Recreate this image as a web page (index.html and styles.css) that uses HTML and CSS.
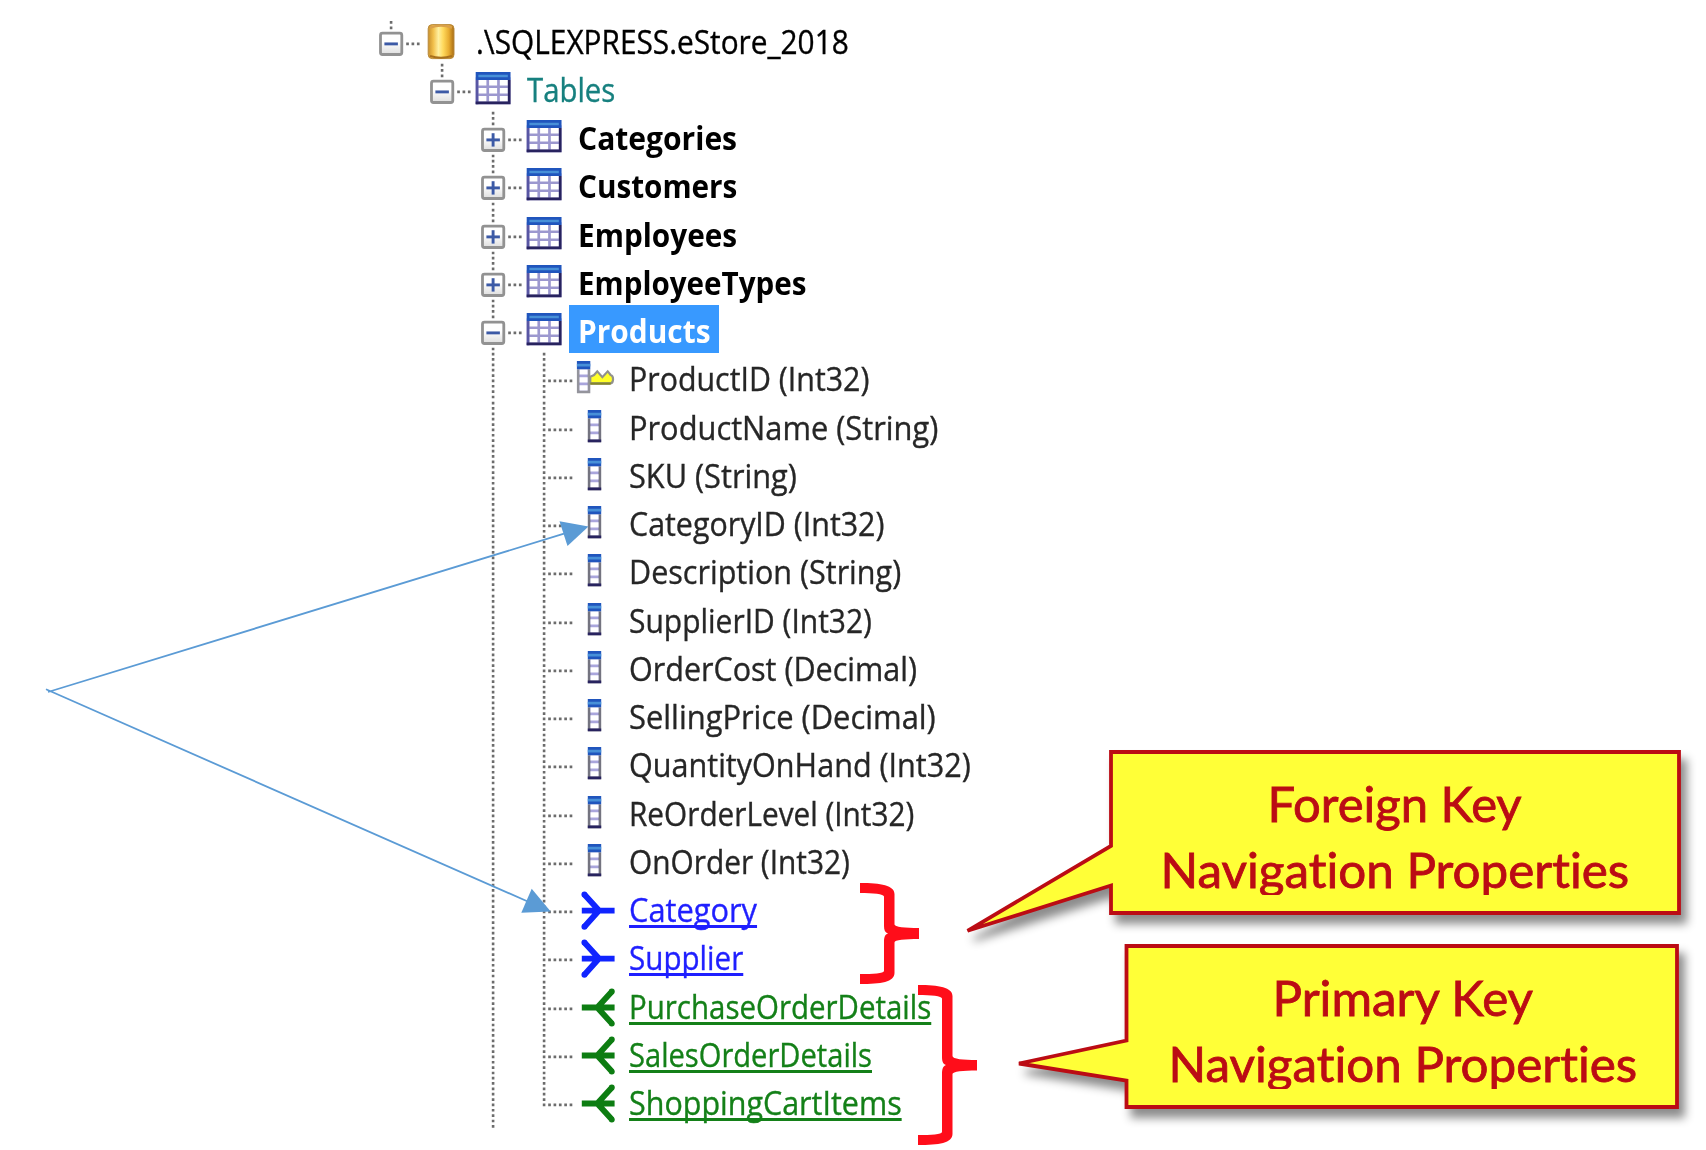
FILE: index.html
```html
<!DOCTYPE html>
<html lang="en">
<head>
<meta charset="utf-8">
<title>eStore_2018 tables</title>
<link rel="stylesheet" href="styles.css">
</head>
<body>
<svg class="defs" aria-hidden="true">
  <defs>
    <linearGradient id="gold" x1="0" x2="1" y1="0" y2="0">
      <stop offset="0" stop-color="#c8902c"/><stop offset=".2" stop-color="#f2c04c"/><stop offset=".4" stop-color="#fff0a0"/><stop offset=".58" stop-color="#ffd95c"/><stop offset=".8" stop-color="#e8ac30"/><stop offset="1" stop-color="#a86c14"/>
    </linearGradient>
    <linearGradient id="btn" x1="0" x2="0" y1="0" y2="1">
      <stop offset=".4" stop-color="#fff"/><stop offset="1" stop-color="#dedede"/>
    </linearGradient>
    <symbol id="rail" viewBox="0 0 50.9 48.25" overflow="visible">
      <path class="dots" d="M25.1 -.24V48.1"/>
    </symbol>
    <symbol id="rail-last" viewBox="0 0 50.9 48.25" overflow="visible">
      <path class="dots" d="M25.1 -.24V51"/>
    </symbol>
    <symbol id="tee" viewBox="0 0 50.9 48.25" overflow="visible">
      <path class="dots" d="M25.1 -.24V48.1"/><path class="dots" d="M29.2 27.9H54"/>
    </symbol>
    <symbol id="end" viewBox="0 0 50.9 48.25" overflow="visible">
      <path class="dots" d="M25.1 -.24V29.5"/><path class="dots" d="M29.2 27.9H54"/>
    </symbol>
    <symbol id="box" viewBox="0 0 50.9 48.25" overflow="visible">
      <path class="dots" d="M40.2 27.9H54"/>
      <rect x="14.5" y="17.2" width="21.3" height="21.3" rx="2" fill="url(#btn)" stroke="#929292" stroke-width="2.8"/>
      <path d="M18.4 27.9H31.9" stroke="#3c5aa6" stroke-width="2.9"/>
    </symbol>
    <symbol id="minus-root" viewBox="0 0 50.9 48.25" overflow="visible">
      <path class="dots" d="M25.1 5.1V14"/><use href="#box" width="50.9" height="48.25"/>
    </symbol>
    <symbol id="minus-last" viewBox="0 0 50.9 48.25" overflow="visible">
      <path class="dots" d="M25.1 -.24V14"/><use href="#box" width="50.9" height="48.25"/>
    </symbol>
    <symbol id="minus" viewBox="0 0 50.9 48.25" overflow="visible">
      <path class="dots" d="M25.1 -.24V14M25.1 42.64V48.1"/><use href="#box" width="50.9" height="48.25"/>
    </symbol>
    <symbol id="plus" viewBox="0 0 50.9 48.25" overflow="visible">
      <use href="#minus" width="50.9" height="48.25"/><path d="M25.1 21.2V34.6" stroke="#3c5aa6" stroke-width="2.9"/>
    </symbol>
    <symbol id="db" viewBox="0 0 50.9 48.25">
      <rect x="11.2" y="8.6" width="25.8" height="34" rx="4" fill="url(#gold)" stroke="#b98a3c" stroke-width="1"/>
      <path d="M13 11.5Q24 7.8 35 11.5" fill="none" stroke="#d9a04a" stroke-width="2.4"/>
      <path d="M13 40Q24 43.5 35 40" fill="none" stroke="#a8701c" stroke-width="2.2"/>
    </symbol>
    <symbol id="table" viewBox="0 0 50.9 48.25">
      <g transform="translate(7.7 8) scale(2.68)">
        <path fill="#9c98cf" d="M0 2h13v10H0z"/><path fill="#2055bd" d="M0 0h13v3H0z"/><path fill="#4790d8" d="M1 1h11v1H1z"/>
        <path fill="#fff" d="M1 3h3v2H1zM5 3h3v2H5zM9 3h3v2H9zM1 6h3v2H1zM5 6h3v2H5zM9 6h3v2H9zM1 9h3v2H1zM5 9h3v2H5zM9 9h3v2H9z"/>
        <path fill="#5856a4" d="M0 3h1v9H0z"/><path fill="#28235f" d="M12 3h1v9H0v-1h12z"/>
      </g>
    </symbol>
    <symbol id="column" viewBox="0 0 50.9 48.25">
      <g transform="translate(18.8 8.1) scale(2.68)">
        <path fill="#747480" d="M0 3h5v9H0z"/><path fill="#a9a5dc" d="M1 3h3v8H1z"/><path fill="#fff" d="M1 3h3v2H1zM1 6h3v2H1zM1 9h3v2H1z"/>
        <path fill="#2055bd" d="M0 0h5v3H0z"/><path fill="#4790d8" d="M0 1h5v1H0z"/><path fill="#28235f" d="M0 11h5v1H0z"/>
      </g>
    </symbol>
    <symbol id="key" viewBox="0 0 50.9 48.25">
      <g transform="translate(7.9 8.1) scale(2.68)">
        <path fill="#94949c" d="M0 3h5v9H0z"/><path fill="#a9a5dc" d="M1 3h3v8H1z"/><path fill="#fff" d="M1 3h3v2H1zM1 6h3v2H1zM1 9h3v2H1z"/>
        <path fill="#2055bd" d="M0 0h5v3H0z"/><path fill="#4790d8" d="M0 1h5v1H0z"/>
        <path d="M5 5.8L6.4 5.2L7.6 3.8L9.5 6L11.5 3.8L12.6 5.2Q13.5 5.5 13.5 6.8Q13.5 8.2 12.6 8.3H5z" fill="#ffff28" stroke="#92928c" stroke-width=".8"/>
        <path d="M5 8.4H12.6" stroke="#85852a" stroke-width=".9"/>
      </g>
    </symbol>
    <symbol id="to-one" viewBox="0 0 50.9 48.25">
      <path d="M12.8 26.6H45.6M15.4 10.6L30 26.6L15.4 42.8" fill="none" stroke="#1024ff" stroke-width="5.9"/>
      <circle cx="15.4" cy="10.5" r="2.95" fill="#1024ff"/><circle cx="15.4" cy="42.8" r="2.95" fill="#1024ff"/>
    </symbol>
    <symbol id="to-many" viewBox="0 0 50.9 48.25">
      <path d="M12.8 26.5H45.6M42.9 10.6L28.3 26.5L42.9 42.6" fill="none" stroke="#0d7d12" stroke-width="5.9"/>
      <circle cx="42.8" cy="10.5" r="2.95" fill="#0d7d12"/><circle cx="42.8" cy="42.6" r="2.95" fill="#0d7d12"/>
    </symbol>
  </defs>
</svg>

<main class="tree">
  <div class="row l0"><svg><use href="#minus-root"/></svg><svg><use href="#db"/></svg><span class="label root" data-width="372.5">.\SQLEXPRESS.eStore_2018</span></div>
  <div class="row l1"><svg><use href="#minus-last"/></svg><svg><use href="#table"/></svg><span class="label folder" data-width="88">Tables</span></div>
  <div class="row l2"><svg><use href="#plus"/></svg><svg><use href="#table"/></svg><span class="label table" data-width="159.5">Categories</span></div>
  <div class="row l2"><svg><use href="#plus"/></svg><svg><use href="#table"/></svg><span class="label table" data-width="159.5">Customers</span></div>
  <div class="row l2"><svg><use href="#plus"/></svg><svg><use href="#table"/></svg><span class="label table" data-width="159">Employees</span></div>
  <div class="row l2"><svg><use href="#plus"/></svg><svg><use href="#table"/></svg><span class="label table" data-width="228.5">EmployeeTypes</span></div>
  <div class="row l2"><svg><use href="#minus"/></svg><svg><use href="#table"/></svg><span class="selected"><span class="label table" data-width="132.5">Products</span></span></div>
  <div class="row l2"><svg><use href="#rail"/></svg><svg><use href="#tee"/></svg><svg><use href="#key"/></svg><span class="label" data-width="240">ProductID (Int32)</span></div>
  <div class="row l2"><svg><use href="#rail"/></svg><svg><use href="#tee"/></svg><svg><use href="#column"/></svg><span class="label" data-width="309">ProductName (String)</span></div>
  <div class="row l2"><svg><use href="#rail"/></svg><svg><use href="#tee"/></svg><svg><use href="#column"/></svg><span class="label" data-width="168">SKU (String)</span></div>
  <div class="row l2"><svg><use href="#rail"/></svg><svg><use href="#tee"/></svg><svg><use href="#column"/></svg><span class="label" data-width="255.500">CategoryID (Int32)</span></div>
  <div class="row l2"><svg><use href="#rail"/></svg><svg><use href="#tee"/></svg><svg><use href="#column"/></svg><span class="label" data-width="272">Description (String)</span></div>
  <div class="row l2"><svg><use href="#rail"/></svg><svg><use href="#tee"/></svg><svg><use href="#column"/></svg><span class="label" data-width="242.500">SupplierID (Int32)</span></div>
  <div class="row l2"><svg><use href="#rail"/></svg><svg><use href="#tee"/></svg><svg><use href="#column"/></svg><span class="label" data-width="288">OrderCost (Decimal)</span></div>
  <div class="row l2"><svg><use href="#rail"/></svg><svg><use href="#tee"/></svg><svg><use href="#column"/></svg><span class="label" data-width="307">SellingPrice (Decimal)</span></div>
  <div class="row l2"><svg><use href="#rail"/></svg><svg><use href="#tee"/></svg><svg><use href="#column"/></svg><span class="label" data-width="342">QuantityOnHand (Int32)</span></div>
  <div class="row l2"><svg><use href="#rail"/></svg><svg><use href="#tee"/></svg><svg><use href="#column"/></svg><span class="label" data-width="285.500">ReOrderLevel (Int32)</span></div>
  <div class="row l2"><svg><use href="#rail"/></svg><svg><use href="#tee"/></svg><svg><use href="#column"/></svg><span class="label" data-width="221">OnOrder (Int32)</span></div>
  <div class="row l2"><svg><use href="#rail"/></svg><svg><use href="#tee"/></svg><svg><use href="#to-one"/></svg><span class="label link one" data-width="128">Category</span></div>
  <div class="row l2"><svg><use href="#rail"/></svg><svg><use href="#tee"/></svg><svg><use href="#to-one"/></svg><span class="label link one" data-width="114.7">Supplier</span></div>
  <div class="row l2"><svg><use href="#rail"/></svg><svg><use href="#tee"/></svg><svg><use href="#to-many"/></svg><span class="label link many" data-width="302">PurchaseOrderDetails</span></div>
  <div class="row l2"><svg><use href="#rail"/></svg><svg><use href="#tee"/></svg><svg><use href="#to-many"/></svg><span class="label link many" data-width="243">SalesOrderDetails</span></div>
  <div class="row l2"><svg><use href="#rail-last"/></svg><svg><use href="#end"/></svg><svg><use href="#to-many"/></svg><span class="label link many" data-width="272.4">ShoppingCartItems</span></div>
</main>

<svg class="annotations" viewBox="0 0 1706 1150" aria-hidden="true">
  <g fill="#5b9bd5" stroke="none">
    <path d="M48 692L564 533.7M46 689.3L530 902.5" stroke="#5b9bd5" stroke-width="1.8"/>
    <path d="M559.5 521.3L588.5 526.5L567.5 546z"/><path d="M531.7 888.7L550.7 911.5L521.3 912.8z"/>
  </g>
  <g fill="#ff0d1a">
    <path d="M860 883C881 883 894.5 885.5 894.5 894V924.500C894.5 927 905 928 919 928V939C905 939 894.5 939.800 894.5 942.500V973C894.5 982 881 984 860 984V974C873 974 884 973.500 884 971V942C884 937 885 934.500 888 933.500C885 932.500 884 930 884 926V896.500C884 894 873 893 860 893z"/>
    <path d="M918 985C939 985 952.500 987.500 952.500 996V1056C952.500 1059 963 1060 977 1060V1070.500C963 1070.500 952.500 1071.500 952.500 1074V1134C952.500 1143 939 1145 918 1145V1135C931 1135 942 1134.500 942 1132V1074C942 1069 943 1066 946 1065C943 1064 942 1061.500 942 1057V998.500C942 996 931 995 918 995z"/>
  </g>
  <g class="bubbles">
    <path d="M1111 752H1679V913H1111V885.500L967.500 930.800L1111 846z"/>
    <path d="M1126.500 946H1677V1107H1126.500V1080.500L1019 1063.500L1126.500 1040.500z"/>
  </g>
</svg>
<div class="callout foreign"><p><span class="line" data-width="254">Foreign Key</span></p><p><span class="line" data-width="469">Navigation Properties</span></p></div>
<div class="callout primary"><p><span class="line" data-width="260">Primary Key</span></p><p><span class="line" data-width="469">Navigation Properties</span></p></div>
<script src="fit.js"></script>
</body>
</html>
```
FILE: styles.css
```css
body {
  margin: 0;
  width: 1706px;
  height: 1150px;
  position: relative;
  overflow: hidden;
  background: #fff;
  font-family: "Open Sans", "Noto Sans", sans-serif;
}

.defs { position: absolute; width: 0; height: 0; }

.dots {
  fill: none;
  stroke: #6c6c6c;
  stroke-width: 2.6;
  stroke-dasharray: 2.68 2.68;
}

.tree { padding: 15.7px 0 0 365.85px; }

.row {
  display: flex;
  height: 48.25px;
  line-height: 48.25px;
  font-size: 32px;
  color: #262626;
  white-space: nowrap;
}

.row svg {
  flex: none;
  width: 50.9px;
  height: 48.25px;
  overflow: visible;
}

.l1 { padding-left: 50.9px; }
.l2 { padding-left: 101.8px; }

.label {
  display: inline-block;
  margin-left: 8.3px;
  padding-top: 2px;
  transform-origin: 0 0;
  -webkit-text-stroke: .35px currentColor;
}

.root { color: #000; }
.folder { color: #17807f; }
.table { color: #000; font-weight: 700; -webkit-text-stroke: 0; }

.selected {
  width: 149.5px;
  height: 47.8px;
  margin-top: -.3px;
  background: #3899ff;
}
.selected .label { color: #fff; }

.link {
  text-decoration: underline;
  text-decoration-thickness: 2.7px;
  text-underline-offset: 3px;
  text-decoration-skip-ink: none;
}
.one { color: #1f1fff; }
.many { color: #148018; }

.annotations {
  position: absolute;
  left: 0;
  top: 0;
  width: 1706px;
  height: 1150px;
}

.bubbles {
  fill: #ffff37;
  stroke: #bb0c14;
  stroke-width: 3.8;
  filter: drop-shadow(6px 9px 5px rgba(0, 0, 0, .45));
}

.callout {
  position: absolute;
  overflow: hidden;
  font-family: Lato, "Open Sans", sans-serif;
  font-size: 48px;
  line-height: 65.7px;
  color: #bb0c14;
  text-align: center;
  font-variant-ligatures: none;
  -webkit-text-stroke: .8px currentColor;
}
.callout p { margin: 0; white-space: nowrap; }
.line { display: inline-block; }
.foreign { left: 1109px; top: 771px; width: 571px; height: 124px; }
.primary { left: 1125px; top: 965px; width: 555px; height: 124px; }
```
FILE: fit.js
```js
function fit() {
  document.querySelectorAll('[data-width]').forEach(function (el) {
    el.style.transform = 'scaleX(' + el.dataset.width / el.offsetWidth + ')';
  });
}
fit();
document.fonts.ready.then(fit);
```
